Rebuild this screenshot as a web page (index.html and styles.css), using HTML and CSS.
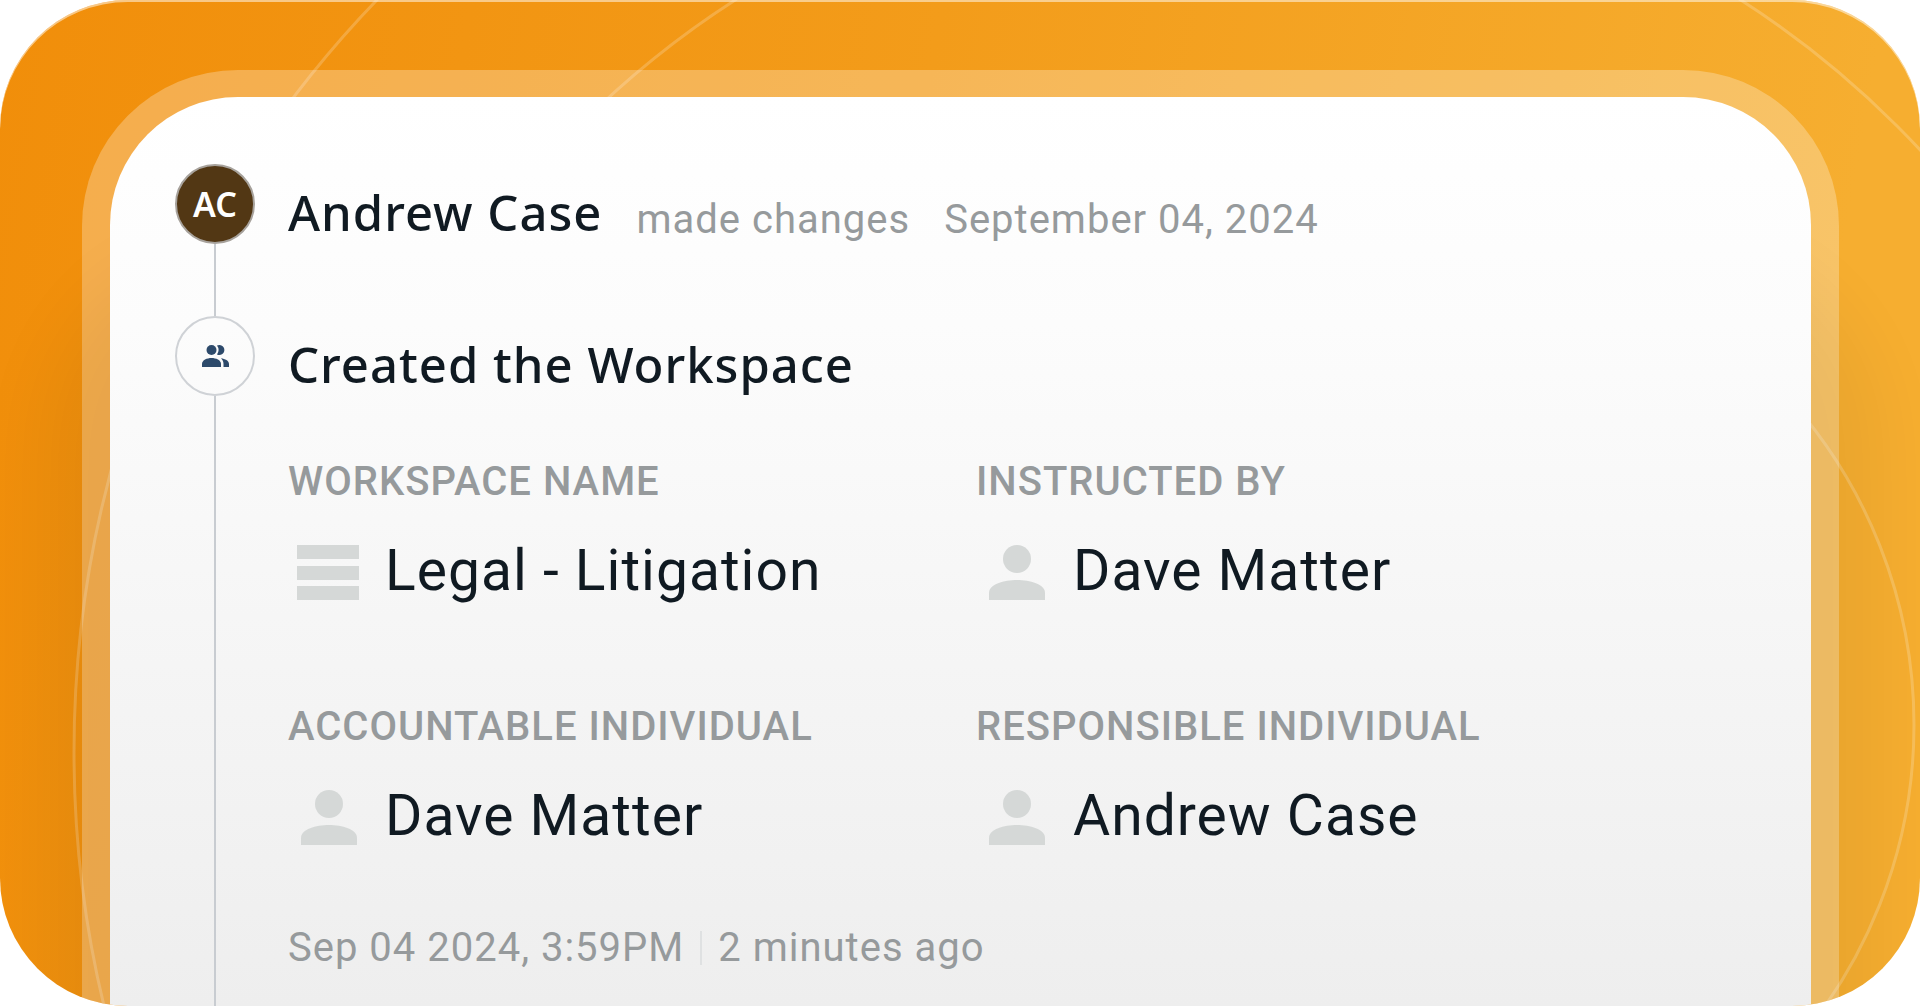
FILE: index.html
```html
<!DOCTYPE html>
<html lang="en">
<head>
  <meta charset="UTF-8" />
  <title>Workspace Activity</title>
  <link rel="stylesheet" href="styles.css">
</head>
<body>
  <main class="stage">
    <!-- decorative rings behind the panel -->
    <svg class="rings" viewBox="0 0 1920 1006" preserveAspectRatio="xMidYMid slice" aria-hidden="true">
      <circle cx="1159" cy="752" r="1085" />
      <circle cx="1238" cy="785" r="932" />
      <circle cx="1426" cy="725" r="488" />
    </svg>

    <div class="frame">
      <section class="panel">
        <article class="entry">
          <div class="rail">
            <div class="marker avatar">AC</div>
            <div class="line"></div>
          </div>
          <header class="content entry-head">
            <h1 class="title">Andrew Case</h1>
            <span class="meta">made changes</span>
            <time class="meta" datetime="2024-09-04">September 04, 2024</time>
          </header>
        </article>

        <article class="entry entry-last">
          <div class="rail">
            <div class="marker">
              <svg class="group-icon" viewBox="0 0 27 22" aria-hidden="true">
                <circle cx="9.500" cy="5" r="5" />
                <path d="M15 .6a5 5 0 1 1 0 8.800a7.500 7.500 0 0 0 0-8.800z" />
                <path d="M0 22v-3c0-4 5-6 9.500-6s9.500 2 9.500 6v3z" />
                <path d="M19 13.200c4 .5 8 2.300 8 5.800v3h-5.500v-3c0-2.500-1-4.300-2.500-5.800z" />
              </svg>
            </div>
            <div class="line"></div>
          </div>
          <div class="content">
            <h2 class="title">Created the Workspace</h2>

            <dl class="fields">
              <div class="field">
                <dt class="label">WORKSPACE NAME</dt>
                <dd class="value">
                  <svg class="icon" viewBox="0 0 62 56" aria-hidden="true">
                    <path d="M0 0h62v14H0zM0 21h62v14H0zM0 41h62v14H0z" />
                  </svg>
                  Legal - Litigation
                </dd>
              </div>
              <div class="field">
                <dt class="label">INSTRUCTED BY</dt>
                <dd class="value">
                  <svg class="icon" viewBox="0 0 62 56" aria-hidden="true">
                    <circle cx="32" cy="14" r="14" />
                    <path d="M4 55v-7c0-9 15-13 28-13s28 4 28 13v7z" />
                  </svg>
                  Dave Matter
                </dd>
              </div>
              <div class="field">
                <dt class="label">ACCOUNTABLE INDIVIDUAL</dt>
                <dd class="value">
                  <svg class="icon" viewBox="0 0 62 56" aria-hidden="true">
                    <circle cx="32" cy="14" r="14" />
                    <path d="M4 55v-7c0-9 15-13 28-13s28 4 28 13v7z" />
                  </svg>
                  Dave Matter
                </dd>
              </div>
              <div class="field">
                <dt class="label">RESPONSIBLE INDIVIDUAL</dt>
                <dd class="value">
                  <svg class="icon" viewBox="0 0 62 56" aria-hidden="true">
                    <circle cx="32" cy="14" r="14" />
                    <path d="M4 55v-7c0-9 15-13 28-13s28 4 28 13v7z" />
                  </svg>
                  Andrew Case
                </dd>
              </div>
            </dl>

            <footer class="stamp">
              <time class="meta" datetime="2024-09-04T15:59">Sep 04 2024, 3:59PM</time>
              <span class="meta ago">2 minutes ago</span>
            </footer>
          </div>
        </article>
      </section>
    </div>
  </main>
</body>
</html>
```
FILE: styles.css
```css
* {
  box-sizing: border-box;
}
body {
  margin: 0;
  background: #fff;
  color: #101a22;
  font-family: Roboto, sans-serif;
}
h1, h2, dl, dd {
  margin: 0;
}

.stage {
  position: relative;
  display: flex;
  min-height: 100vh;
  padding: 70px 81px 0 82px;
  overflow: hidden;
  border-radius: 128px;
  background: linear-gradient(100deg, #f18e0a 0%, #f39c1a 45%, #f6ae30 90%);
  box-shadow: inset 0 2px rgba(255, 255, 255, 0.5);
}
.rings {
  position: absolute;
  inset: 0;
  width: 100%;
  height: 100%;
  fill: none;
  stroke: rgba(255, 255, 255, 0.2);
  stroke-width: 3;
}
.frame {
  position: relative;
  display: flex;
  flex: 1;
  padding: 27px 28px 0;
  border-radius: 156px 156px 0 0;
  background: rgba(255, 255, 255, 0.27);
}
.panel {
  display: flex;
  flex: 1;
  flex-direction: column;
  padding: 67px 147px 0 65px;
  border-radius: 128px 128px 0 0;
  background: linear-gradient(#fff, #fcfcfc 25%, #eee);
  box-shadow: 0 220px 70px 70px rgba(0, 0, 0, 0.05);
}

.entry {
  display: flex;
  gap: 33px;
}
.entry-last {
  flex: 1;
}
.rail {
  display: flex;
  flex-direction: column;
  align-items: center;
  width: 80px;
}
.line {
  flex: 1;
  width: 2px;
  background: #c8ccd1;
}
.marker {
  display: flex;
  align-items: center;
  justify-content: center;
  width: 80px;
  height: 80px;
  border: 2px solid #cfd2d6;
  border-radius: 50%;
}
.avatar {
  border-color: #a7a29c;
  background: #523714;
  color: #fff;
  font-family: "Noto Sans", sans-serif;
  font-size: 34px;
  font-weight: 600;
}
.group-icon {
  width: 27px;
  height: 22px;
  fill: #2d4a6b;
}

.content {
  flex: 1;
  padding-top: 16px;
}
.entry-head {
  display: flex;
  align-items: flex-end;
  gap: 34px;
  padding-bottom: 72px;
}
.title {
  font-family: "Noto Sans", sans-serif;
  font-size: 49px;
  font-weight: 500;
  line-height: 64px;
  letter-spacing: 1px;
}
.meta {
  color: #969a9c;
  font-size: 40px;
  line-height: 48px;
  letter-spacing: 1px;
}

.fields {
  display: grid;
  grid-template-columns: 1fr 1fr;
  row-gap: 100px;
  margin-top: 62px;
}
.label {
  color: #969a9c;
  font-size: 40px;
  font-weight: 500;
  line-height: 48px;
  letter-spacing: 1px;
}
.value {
  display: flex;
  align-items: center;
  gap: 26px;
  margin-top: 33px;
  padding-left: 9px;
  font-size: 57px;
  line-height: 64px;
  letter-spacing: 1px;
}
.icon {
  width: 62px;
  height: 56px;
  margin-top: 4px;
  fill: #d5d8d7;
}
.stamp {
  display: flex;
  align-items: center;
  gap: 16px;
  margin-top: 76px;
}
.ago {
  padding-left: 16px;
  border-left: 2px solid #dfe1e2;
  line-height: 34px;
}
```
